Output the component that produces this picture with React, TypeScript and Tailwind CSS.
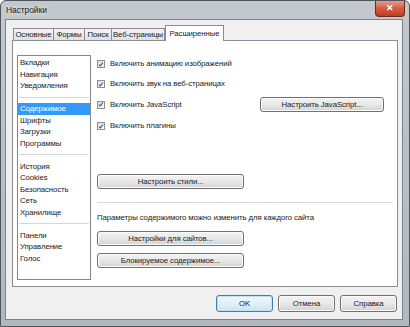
import React from 'react';

const listItems = [
  'Вкладки', 'Навигация', 'Уведомления', '-',
  'Содержимое', 'Шрифты', 'Загрузки', 'Программы', '-',
  'История', 'Cookies', 'Безопасность', 'Сеть', 'Хранилище', '-',
  'Панели', 'Управление', 'Голос',
];

const tabs = [
  { label: 'Основные', w: 'w-[41px]' },
  { label: 'Формы', w: 'w-[32px]' },
  { label: 'Поиск', w: 'w-[28px]' },
  { label: 'Веб-страницы', w: 'w-[54px]' },
];

const Check: React.FC<{ label: string }> = ({ label }) => (
  <div className="flex items-center">
    <span className="w-[8px] h-[8px] border border-[#8e8f8f] bg-linear-to-br from-[#dedede] to-[#fbfbfb] flex items-center justify-center">
      <svg viewBox="0 0 8 8" className="w-[7px] h-[7px]">
        <path d="M1.4 4.1 L3.1 5.9 L6.6 1.4" fill="none" stroke="#3d5277" strokeWidth="1.4" />
      </svg>
    </span>
    <span className="ml-[5px]">{label}</span>
  </div>
);

const Btn: React.FC<{ label: string; className?: string }> = ({ label, className = '' }) => (
  <div
    className={`flex items-center justify-center whitespace-nowrap rounded-[3px] border border-[#707070] bg-linear-to-b from-[#f3f3f3] via-[#e8e8e8] to-[#d3d3d3] shadow-[inset_0_0_0_1px_#fbfbfb] ${className}`}
  >
    {label}
  </div>
);

export default function App() {
  return (
    <div className="w-[410px] h-[327px] bg-white font-['Liberation_Sans',Arial,sans-serif] text-[7.8px] tracking-[-0.1px] text-[#1a1a1a]">
      <div className="relative w-[410px] h-[327px] rounded-t-[6px] border border-[#4f555c] bg-linear-to-b from-[#c3c8cd] to-[#b3b8bd] overflow-hidden">
        {/* title bar */}
        <div className="h-[18px] flex items-center pl-[5px] text-[8.5px] text-[#1b1b1b] [text-shadow:0_0_5px_#ffffff]">
          Настройки
        </div>
        <div className="absolute top-0 right-[4px] w-[30px] h-[16px] rounded-b-[4px] border border-t-0 border-[#6e2a20] bg-linear-to-b from-[#e79a88] via-[#d25b44] to-[#c23a22] flex items-center justify-center text-white text-[9px] font-bold">
          ✕
        </div>

        {/* client area */}
        <div className="ml-[4px] w-[398px] h-[301px] border border-[#7d838a] bg-[#f0f0f0] flex flex-col">
          <div className="flex items-end h-[16px] mt-[5px] ml-[7px]">
            {tabs.map((t) => (
              <div
                key={t.label}
                className={`${t.w} h-[13px] -mr-px border border-[#898c95] bg-linear-to-b from-[#f4f4f4] to-[#e1e1e1] flex items-center justify-center leading-none whitespace-nowrap`}
              >
                {t.label}
              </div>
            ))}
            <div className="relative z-10 w-[59px] h-[16px] ml-[1px] border border-b-0 border-[#898c95] bg-white flex items-center justify-center leading-none whitespace-nowrap">
              Расширенные
            </div>
          </div>

          <div className="ml-[6px] -mt-px w-[386px] h-[247px] border border-[#898c95] bg-white flex">
            {/* category list */}
            <div className="ml-[4px] mt-[14px] w-[74px] h-[225px] border border-[#828790] bg-white pt-[1px]">
              {listItems.map((item, i) =>
                item === '-' ? (
                  <div key={i} className="h-[11.5px] flex items-center px-[1px]">
                    <div className="w-full h-px bg-[#d6d6d6]" />
                  </div>
                ) : (
                  <div
                    key={i}
                    className={`h-[11.5px] leading-[11.5px] pl-[2px] whitespace-nowrap ${
                      item === 'Содержимое' ? 'bg-[#3399ff] text-white' : ''
                    }`}
                  >
                    {item}
                  </div>
                )
              )}
            </div>

            {/* settings */}
            <div className="ml-[6px] flex-1 pr-[4px] pt-[17px] flex flex-col">
              <div className="h-[12px] flex items-center">
                <Check label="Включить анимацию изображений" />
              </div>
              <div className="h-[12px] mt-[8px] flex items-center">
                <Check label="Включить звук на веб-страницах" />
              </div>
              <div className="h-[15px] mt-[7px] flex items-center justify-between">
                <Check label="Включить JavaScript" />
                <Btn label="Настроить JavaScript..." className="w-[124px] h-[15px] mr-[9px]" />
              </div>
              <div className="h-[12px] mt-[8px] flex items-center">
                <Check label="Включить плагины" />
              </div>

              <Btn label="Настроить стили..." className="w-[147px] h-[15px] mt-[42px]" />

              <div className="h-px bg-[#d8d8d8] mt-[13px]" />

              <div className="h-[12px] leading-[12px] mt-[9px]">
                Параметры содержимого можно изменить для каждого сайта
              </div>

              <Btn label="Настройки для сайтов..." className="w-[147px] h-[15px] mt-[7px]" />
              <Btn label="Блокируемое содержимое..." className="w-[147px] h-[15px] mt-[7px]" />
            </div>
          </div>

          {/* dialog buttons */}
          <div className="flex justify-end gap-[5px] pr-[5px] mt-[8px]">
            <div className="w-[57px] h-[17px] rounded-[3px] border border-[#3c7fb1] bg-linear-to-b from-[#f1f8fc] via-[#e3eff7] to-[#cde3f1] shadow-[inset_0_0_0_1px_#bfe4f7] flex items-center justify-center">
              OK
            </div>
            <Btn label="Отмена" className="w-[57px] h-[17px]" />
            <Btn label="Справка" className="w-[57px] h-[17px]" />
          </div>
        </div>
      </div>
    </div>
  );
}
